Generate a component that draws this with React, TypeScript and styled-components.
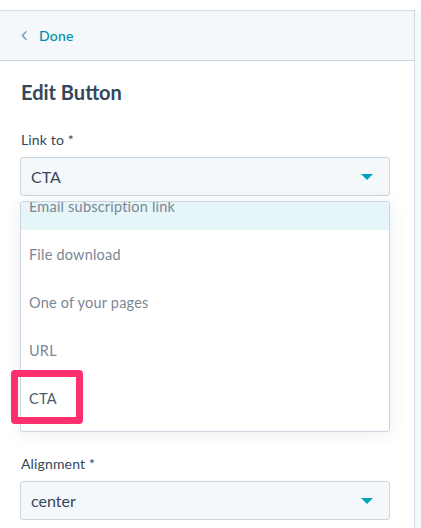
import React from "react";
import styled, { createGlobalStyle } from "styled-components";

const Global = createGlobalStyle`
  html, body { margin: 0; padding: 0; background: #ffffff; }
  body { font-family: Lato, "Open Sans", sans-serif; -webkit-font-smoothing: antialiased; }
`;

const Page = styled.div`
  width: 421px;
  height: 528px;
  overflow: hidden;
  display: flex;
  padding-top: 10px;
  box-sizing: border-box;
  background: #ffffff;
`;

const Panel = styled.div`
  width: 415px;
  flex: none;
  border-top: 1px solid #d4dde8;
  border-right: 1px solid #cfd9e4;
  box-sizing: border-box;
  display: flex;
  flex-direction: column;
  background: #ffffff;
`;

const Gutter = styled.div`
  flex: 1;
  background: #f7f9fb;
`;

const Header = styled.div`
  height: 50px;
  box-sizing: border-box;
  background: #f5f8fa;
  border-bottom: 1px solid #cbd6e2;
  display: flex;
  align-items: center;
  padding-left: 21px;
  gap: 12px;
`;

const DoneLink = styled.span`
  font-size: 14px;
  font-weight: 500;
  color: #0091ae;
  letter-spacing: 0.2px;
`;

const Body = styled.div`
  padding: 19px 24px 0 20px;
  display: flex;
  flex-direction: column;
`;

const Title = styled.h2`
  margin: 0 0 0 1px;
  font-size: 20px;
  line-height: 24px;
  font-weight: 700;
  color: #33475b;
`;

const Label = styled.label<{ $top: number }>`
  display: block;
  margin: ${(p) => p.$top}px 0 0 1px;
  font-size: 14px;
  line-height: 20px;
  color: #33475b;
  letter-spacing: 0.15px;
`;

const Select = styled.div`
  margin-top: 7px;
  height: 39px;
  box-sizing: border-box;
  background: #f5f8fa;
  border: 1px solid #cbd6e2;
  border-radius: 3px;
  display: flex;
  align-items: center;
  justify-content: space-between;
  padding: 0 16px 0 10px;
  font-size: 16px;
  color: #33475b;
`;

const Caret = styled.span`
  width: 0;
  height: 0;
  border-left: 6px solid transparent;
  border-right: 6px solid transparent;
  border-top: 6px solid #00a4bd;
`;

const DropWrap = styled.div`
  position: relative;
  margin-top: 5px;
`;

const Dropdown = styled.div`
  height: 231px;
  box-sizing: border-box;
  border: 1px solid #cbd6e2;
  border-radius: 3px;
  background: #ffffff;
  overflow: hidden;
  box-shadow: 0 2px 18px rgba(45, 62, 80, 0.09);
`;

const List = styled.div`
  margin-top: -20px;
  display: flex;
  flex-direction: column;
`;

const Item = styled.div<{ $active?: boolean; $strong?: boolean }>`
  height: 48px;
  flex: none;
  display: flex;
  align-items: center;
  padding-left: 8px;
  font-size: 14.5px;
  color: ${(p) => (p.$strong ? "#4a5a6b" : "#7b8794")};
  background: ${(p) => (p.$active ? "#e5f5f8" : "#ffffff")};
  letter-spacing: 0.2px;
`;

const Highlight = styled.div`
  position: absolute;
  left: -9px;
  top: 169px;
  width: 72px;
  height: 54px;
  box-sizing: border-box;
  border: 7px solid #fe2f6c;
  border-radius: 4px;
  pointer-events: none;
`;

const Chevron = () => (
  <svg width="6" height="9" viewBox="0 0 6 9" fill="none">
    <path d="M5 0.8 L1.3 4.5 L5 8.2" stroke="#7c98b6" strokeWidth="1.4" strokeLinecap="round" strokeLinejoin="round" />
  </svg>
);

const options = ["Email subscription link", "File download", "One of your pages", "URL", "CTA"];

export default function App() {
  return (
    <>
      <Global />
      <Page>
        <Panel>
          <Header>
            <Chevron />
            <DoneLink>Done</DoneLink>
          </Header>
          <Body>
            <Title>Edit Button</Title>
            <Label $top={26}>Link to *</Label>
            <Select>
              <span>CTA</span>
              <Caret />
            </Select>
            <DropWrap>
              <Dropdown>
                <List>
                  {options.map((o, i) => (
                    <Item key={o} $active={i === 0} $strong={o === "CTA"}>
                      {o}
                    </Item>
                  ))}
                </List>
              </Dropdown>
              <Highlight />
            </DropWrap>
            <Label $top={22}>Alignment *</Label>
            <Select>
              <span>center</span>
              <Caret />
            </Select>
          </Body>
        </Panel>
        <Gutter />
      </Page>
    </>
  );
}
